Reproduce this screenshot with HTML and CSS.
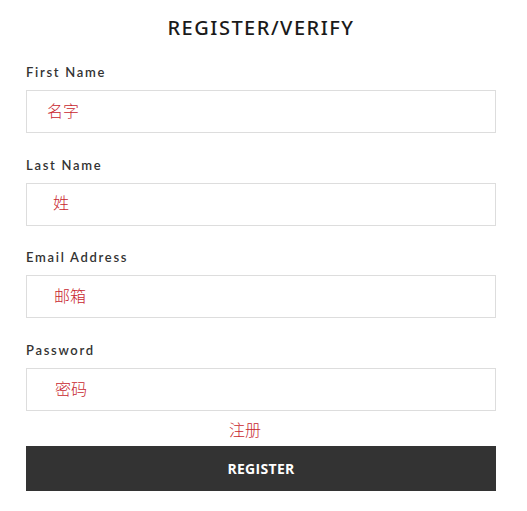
FILE: index.html
```html
<!DOCTYPE html>
<html>
<head>
<meta charset="utf-8">
<link rel="stylesheet" href="styles.css">
</head>
<body>
<div class="page">
  <h1 class="title">REGISTER/VERIFY</h1>
  <div class="field">
    <div class="label">First Name</div>
    <div class="box p1"><span class="hint">名字</span></div>
  </div>
  <div class="field">
    <div class="label">Last Name</div>
    <div class="box p2"><span class="hint">姓</span></div>
  </div>
  <div class="field">
    <div class="label">Email Address</div>
    <div class="box p3"><span class="hint">邮箱</span></div>
  </div>
  <div class="field last">
    <div class="label">Password</div>
    <div class="box p4"><span class="hint">密码</span></div>
  </div>
  <div class="note">注册</div>
  <div class="button">REGISTER</div>
</div>
</body>
</html>
```
FILE: styles.css
```css
html, body { margin: 0; padding: 0; background: #fff; }
.page {
  width: 470px;
  margin-left: 26px;
  padding-top: 13px;
  font-family: Lato, "Open Sans", "Noto Sans CJK SC", sans-serif;
}
.title {
  margin: 0 0 20px 0;
  height: 30px;
  line-height: 30px;
  font-size: 20px;
  font-weight: 500;
  letter-spacing: 1.5px;
  text-align: center;
  color: #1a1a1a;
  font-family: "Noto Sans", Lato, sans-serif;
}
.field { margin-bottom: 22.7px; }
.field.last { margin-bottom: 8px; }
.label {
  height: 18px;
  line-height: 18px;
  font-size: 13px;
  letter-spacing: 1.7px;
  color: #333;
  font-weight: 600;
  margin-bottom: 9px;
}
.box {
  box-sizing: border-box;
  height: 43px;
  border: 1px solid #ddd;
  display: flex;
  align-items: center;
}
.p1 { padding-left: 20px; }
.p2 { padding-left: 26px; }
.p3 { padding-left: 27px; }
.p4 { padding-left: 28px; }
.hint {
  font-family: "Noto Sans CJK SC", sans-serif;
  font-size: 16px;
  line-height: 20px;
  font-weight: 300;
  color: #c8262e;
  margin-top: -4px;
}
.note {
  font-family: "Noto Sans CJK SC", sans-serif;
  font-size: 16px;
  font-weight: 300;
  line-height: 20px;
  height: 20px;
  color: #c8262e;
  text-align: center;
  padding-right: 32px;
  margin-bottom: 7px;
}
.button {
  height: 45px;
  background: #333;
  color: #fff;
  font-weight: 700;
  font-size: 14px;
  display: flex;
  align-items: center;
  justify-content: center;
  letter-spacing: 0.3px;
  font-family: "Open Sans", Lato, sans-serif;
}
```
